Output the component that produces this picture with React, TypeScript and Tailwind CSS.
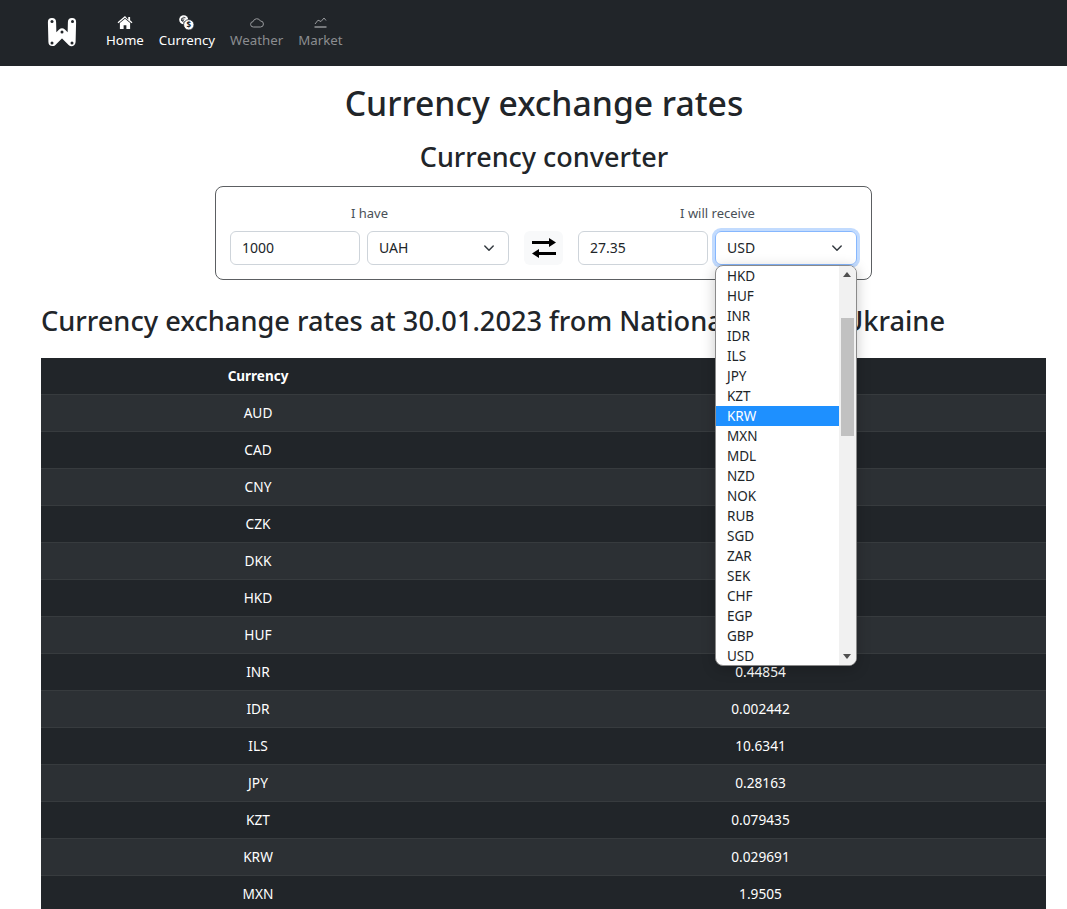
const rates: [string, string][] = [
  ['AUD', ''],
  ['CAD', ''],
  ['CNY', ''],
  ['CZK', ''],
  ['DKK', ''],
  ['HKD', ''],
  ['HUF', ''],
  ['INR', '0.44854'],
  ['IDR', '0.002442'],
  ['ILS', '10.6341'],
  ['JPY', '0.28163'],
  ['KZT', '0.079435'],
  ['KRW', '0.029691'],
  ['MXN', '1.9505'],
];

const options = ['HKD', 'HUF', 'INR', 'IDR', 'ILS', 'JPY', 'KZT', 'KRW', 'MXN', 'MDL', 'NZD', 'NOK', 'RUB', 'SGD', 'ZAR', 'SEK', 'CHF', 'EGP', 'GBP', 'USD'];

const Chevron = () => (
  <svg width="16" height="16" viewBox="0 0 16 16" fill="none" stroke="#343a40" strokeWidth="1.500" strokeLinecap="round" strokeLinejoin="round" className="absolute right-[11px] top-[8px]">
    <path d="m3.800 6 4.200 4.200L12.200 6" />
  </svg>
);

const NavItem = ({ label, active, icon }: { label: string; active?: boolean; icon: React.ReactNode }) => (
  <div className={`flex flex-col items-center px-[7px] ${active ? 'text-white' : 'text-[#8b8d90]'}`}>
    <div className="flex h-[15px] items-center justify-center">{icon}</div>
    <span className="text-[13.300px] leading-[21px]">{label}</span>
  </div>
);

export default function App() {
  return (
    <div className="h-[909px] overflow-hidden bg-white text-[#212529] [font-family:'Noto_Sans',sans-serif]">
      <nav className="flex h-[66px] items-start gap-px bg-[#212529] pl-[47px] pt-[15px]">
        <svg width="30" height="30" viewBox="0 0 30 30" className="mr-[21px] mt-[2px]">
          <path d="M5 5.200 5.500 25 15 15.500 24.500 25 25 5.200" fill="none" stroke="#fff" strokeWidth="8.200" strokeLinecap="round" strokeLinejoin="round" />
          <circle cx="5" cy="4.500" r="1.500" fill="#212529" />
          <circle cx="25.500" cy="4.500" r="1.500" fill="#212529" />
          <circle cx="15" cy="15" r="1.500" fill="#212529" />
          <circle cx="5" cy="26" r="1.500" fill="#212529" />
          <circle cx="25" cy="26" r="1.500" fill="#212529" />
        </svg>
        <NavItem
          label="Home"
          active
          icon={
            <svg width="16" height="13" viewBox="0 0 16 14" fill="#fff">
              <path d="M8 0 0 6.800l.9 1L8 1.900l7.100 5.900.9-1-2.500-2.100V1h-2v3L8 0z" />
              <path d="M8 3 2.500 7.600V14h4v-4h3v4h4V7.600L8 3z" />
            </svg>
          }
        />
        <NavItem
          label="Currency"
          active
          icon={
            <svg width="15" height="15" viewBox="0 0 15 15">
              <circle cx="4.700" cy="4.700" r="4.500" fill="#fff" />
              <path d="M6.500 2.800A2.400 2.400 0 1 0 6.500 6.600M2 4h3.500M2 5.400h3" fill="none" stroke="#212529" strokeWidth=".8" />
              <circle cx="9.800" cy="9.800" r="5.200" fill="#fff" stroke="#212529" strokeWidth=".8" />
              <text x="9.800" y="12.700" textAnchor="middle" fontSize="8" fontWeight="700" fill="#212529">$</text>
            </svg>
          }
        />
        <NavItem
          label="Weather"
          icon={
            <svg width="14" height="11" viewBox="0 0 14 11" fill="none" stroke="#9a9c9f" strokeWidth="1">
              <path d="M3.500 10a2.700 2.700 0 0 1-.4-5.400A3.900 3.900 0 0 1 10.400 4a3 3 0 0 1 .1 6z" />
            </svg>
          }
        />
        <NavItem
          label="Market"
          icon={
            <svg width="13" height="11" viewBox="0 0 13 11" fill="none" stroke="#9a9c9f" strokeWidth="1">
              <path d="M1 7 4 3.200 7 4.500 10 1l2 2.500" />
              <path d="M.5 10h12" strokeWidth="1.400" />
            </svg>
          }
        />
      </nav>

      <h1 className="mt-[14px] pl-[21px] text-center text-[33.700px] font-medium leading-[46px]">Currency exchange rates</h1>
      <h2 className="mt-[13px] pl-[21px] text-center text-[27px] font-medium leading-[36px]">Currency converter</h2>

      <div className="ml-[215px] mt-[11px] flex h-[94px] w-[657px] gap-[15px] rounded-lg border border-[#5c5f62] px-[14px] pt-[17px]">
        <div className="w-[279px]">
          <div className="text-center text-[13px] leading-[18px] text-[#495057]">I have</div>
          <div className="mt-[9px] flex gap-[7px]">
            <div className="flex h-[34px] w-[130px] items-center rounded-md border border-[#ced4da] px-[11px] pb-[2px] text-[14px]">1000</div>
            <div className="relative flex h-[34px] w-[142px] items-center rounded-md border border-[#ced4da] px-[11px] pb-[2px] text-[14px]">
              UAH
              <Chevron />
            </div>
          </div>
        </div>
        <div className="mt-[27px] flex h-[34px] w-[39px] items-center justify-center rounded-md bg-[#f8f9fa]">
          <svg width="24" height="20" viewBox="0 0 24 20" fill="#000">
            <path d="M0 3h17V0l7 4.500-7 4.500V6H0z" />
            <path d="M24 14H7v-3l-7 4.500L7 20v-3h17z" />
          </svg>
        </div>
        <div className="w-[279px]">
          <div className="text-center text-[13px] leading-[18px] text-[#495057]">I will receive</div>
          <div className="mt-[9px] flex gap-[7px]">
            <div className="flex h-[34px] w-[130px] items-center rounded-md border border-[#ced4da] px-[11px] pb-[2px] text-[14px]">27.35</div>
            <div className="relative flex h-[34px] w-[142px] items-center rounded-md border border-[#86b7fe] px-[11px] pb-[2px] text-[14px] shadow-[0_0_0_3px_rgba(13,110,253,0.25)]">
              USD
              <Chevron />
            </div>
          </div>
        </div>
      </div>

      <h3 className="ml-[41px] mt-[21px] whitespace-nowrap text-[27.200px] font-medium leading-[40px]">Currency exchange rates at 30.01.2023 from National Bank of Ukraine</h3>

      <table className="ml-[41px] mt-[17px] w-[1005px] table-fixed border-separate border-spacing-0 text-center text-[13.700px] text-white">
        <thead>
          <tr className="h-[37px] bg-[#212529] text-[13.500px]">
            <th className="w-[434px] border-b border-[#373b3e] font-bold">Currency</th>
            <th className="border-b border-[#373b3e] font-bold"></th>
          </tr>
        </thead>
        <tbody>
          {rates.map(([code, rate], i) => (
            <tr key={code} className={`h-[37px] ${i % 2 === 0 ? 'bg-[#2c3034]' : 'bg-[#212529]'}`}>
              <td className="border-b border-[#373b3e]">{code}</td>
              <td className="border-b border-[#373b3e]">{rate}</td>
            </tr>
          ))}
        </tbody>
      </table>

      <div className="absolute left-[715px] top-[265px] flex h-[401px] w-[142px] overflow-hidden rounded-lg border border-[#8a8a8a] bg-white shadow-[0_3px_14px_rgba(0,0,0,0.22)]">
        <div className="w-[123px] text-[13.500px] leading-[20px] text-[#212529]">
          {options.map((o) => (
            <div key={o} className={`h-[20px] pl-[11px] ${o === 'KRW' ? 'bg-[#1e90ff] text-white' : ''}`}>
              {o}
            </div>
          ))}
        </div>
        <div className="relative w-[17px] bg-[#f1f1f1]">
          <div className="absolute left-[2px] top-[52px] h-[118px] w-[13px] bg-[#c1c1c1]" />
          <div className="absolute left-[4px] top-[6px] h-0 w-0 border-x-[4px] border-b-[5px] border-x-transparent border-b-[#505050]" />
          <div className="absolute bottom-[6px] left-[4px] h-0 w-0 border-x-[4px] border-t-[5px] border-x-transparent border-t-[#505050]" />
        </div>
      </div>
    </div>
  );
}
